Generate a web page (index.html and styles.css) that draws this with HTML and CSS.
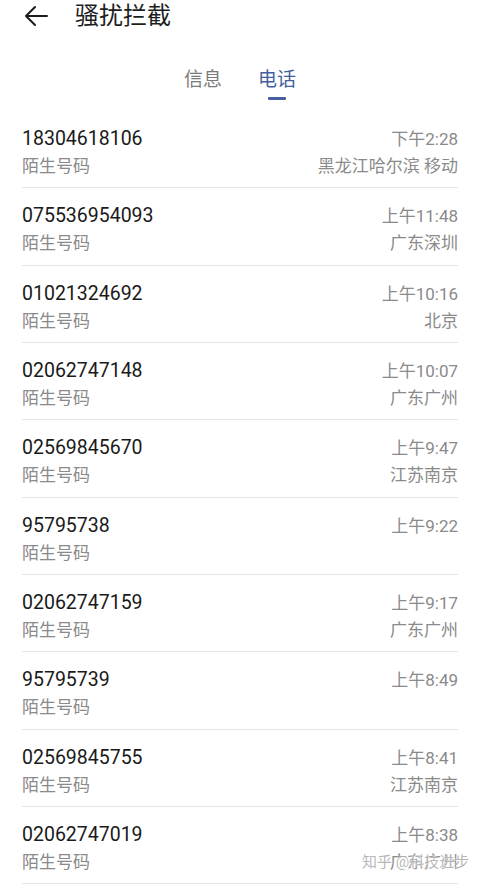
FILE: index.html
```html
<!DOCTYPE html>
<html lang="zh-CN">
<head>
<meta charset="utf-8">
<title>骚扰拦截</title>
<link rel="stylesheet" href="styles.css">
</head>
<body>
<div class="app">
  <header class="topbar">
    <svg class="back" width="26" height="22" viewBox="0 0 26 22" aria-hidden="true">
      <path d="M24 11H3 M12 2L3 11L12 20" fill="none" stroke="#1c1c1c" stroke-width="2" stroke-linecap="round" stroke-linejoin="round"/>
    </svg>
    <h1 class="title">骚扰拦截</h1>
  </header>

  <nav class="tabs">
    <div class="tab">信息</div>
    <div class="tab active">电话</div>
  </nav>

  <ul class="list">
    <li class="row"><div class="line"><span class="num">18304618106</span><span class="time">下午2:28</span></div><div class="line sub"><span>陌生号码</span><span>黑龙江哈尔滨 移动</span></div></li>
    <li class="row"><div class="line"><span class="num">075536954093</span><span class="time">上午11:48</span></div><div class="line sub"><span>陌生号码</span><span>广东深圳</span></div></li>
    <li class="row"><div class="line"><span class="num">01021324692</span><span class="time">上午10:16</span></div><div class="line sub"><span>陌生号码</span><span>北京</span></div></li>
    <li class="row"><div class="line"><span class="num">02062747148</span><span class="time">上午10:07</span></div><div class="line sub"><span>陌生号码</span><span>广东广州</span></div></li>
    <li class="row"><div class="line"><span class="num">02569845670</span><span class="time">上午9:47</span></div><div class="line sub"><span>陌生号码</span><span>江苏南京</span></div></li>
    <li class="row"><div class="line"><span class="num">95795738</span><span class="time">上午9:22</span></div><div class="line sub"><span>陌生号码</span><span></span></div></li>
    <li class="row"><div class="line"><span class="num">02062747159</span><span class="time">上午9:17</span></div><div class="line sub"><span>陌生号码</span><span>广东广州</span></div></li>
    <li class="row"><div class="line"><span class="num">95795739</span><span class="time">上午8:49</span></div><div class="line sub"><span>陌生号码</span><span></span></div></li>
    <li class="row"><div class="line"><span class="num">02569845755</span><span class="time">上午8:41</span></div><div class="line sub"><span>陌生号码</span><span>江苏南京</span></div></li>
    <li class="row"><div class="line"><span class="num">02062747019</span><span class="time">上午8:38</span></div><div class="line sub"><span>陌生号码</span><span>广东广州</span></div></li>
  </ul>

  <div class="watermark">知乎 @科技进步</div>
</div>
</body>
</html>
```

FILE: styles.css
```css
* { box-sizing: border-box; }
html, body {
  margin: 0;
  padding: 0;
  background: #ffffff;
}
body {
  font-family: Roboto, "Noto Sans CJK SC", sans-serif;
  color: #1a1a1a;
  overflow: hidden;
}
.app {
  position: relative;
  width: 480px;
  height: 888px;
  overflow: hidden;
}
.topbar {
  display: flex;
  align-items: center;
  height: 32px;
  padding-left: 23px;
}
.back {
  display: block;
  margin-right: 26px;
}
.title {
  margin: 0;
  font-size: 24px;
  font-weight: 400;
  line-height: 32px;
  color: #1e1e1e;
}
.tabs {
  display: flex;
  justify-content: center;
  gap: 36px;
  margin-top: 35px;
  height: 44px;
}
.tab {
  position: relative;
  font-size: 19px;
  line-height: 26px;
  height: 26px;
  color: #7a7a7a;
}
.tab.active {
  color: #44609f;
}
.tab.active::after {
  content: "";
  position: absolute;
  left: 50%;
  top: 30px;
  width: 18px;
  height: 3px;
  margin-left: -9px;
  background: #44609f;
  border-radius: 1px;
}
.list {
  list-style: none;
  margin: 0;
  padding: 0 22px;
}
.row {
  height: 77.33px;
  padding-top: 15px;
  border-bottom: 1px solid #e6e6e6;
}
.line {
  display: flex;
  justify-content: space-between;
  align-items: center;
}
.num {
  font-size: 19.5px;
  line-height: 26px;
  color: #1a1a1a;
}
.time {
  font-size: 17px;
  line-height: 26px;
  color: #8a8a8a;
}
.sub {
  margin-top: 2px;
  font-size: 17px;
  line-height: 24px;
  color: #8a8a8a;
}
.watermark {
  position: absolute;
  left: 362px;
  top: 851px;
  font-size: 15px;
  line-height: 22px;
  color: rgba(170, 170, 170, 0.85);
  text-shadow: 0 0 2px #ffffff, 1px 1px 1px rgba(255,255,255,0.9);
  white-space: nowrap;
}
```
